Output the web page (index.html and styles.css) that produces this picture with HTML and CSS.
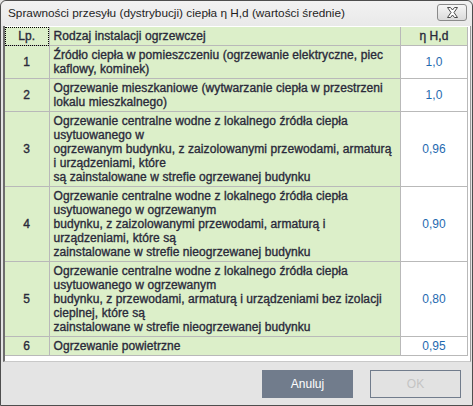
FILE: index.html
```html
<!DOCTYPE html>
<html lang="pl">
<head>
  <meta charset="UTF-8" />
  <title>Sprawności przesyłu</title>
  <link rel="stylesheet" href="styles.css">
</head>
<body>
  <div class="window">
    <div class="titlebar">
      <span class="title">Sprawności przesyłu (dystrybucji) ciepła η H,d (wartości średnie)</span>
      <button class="close-btn" aria-label="Zamknij">
        <svg width="17" height="11" viewBox="0 0 17 11">
          <path d="M3.5 0.5h3l2 2.5 2-2.5h3l-3.5 5 3.5 5h-3l-2-2.5-2 2.5h-3l3.5-5z"
                fill="#fff" stroke="#4a4a4a" stroke-width="1" stroke-linejoin="round"/>
        </svg>
      </button>
    </div>

    <div class="pane">
      <table class="grid">
        <thead>
          <tr>
            <th class="col-lp focused">Lp.</th>
            <th class="col-name">Rodzaj instalacji ogrzewczej</th>
            <th class="col-val">η H,d</th>
          </tr>
        </thead>
        <tbody>
          <tr>
            <td class="col-lp">1</td>
            <td class="col-name">Źródło ciepła w pomieszczeniu (ogrzewanie elektryczne, piec<br>kaflowy, kominek)</td>
            <td class="col-val">1,0</td>
          </tr>
          <tr>
            <td class="col-lp">2</td>
            <td class="col-name">Ogrzewanie mieszkaniowe (wytwarzanie ciepła w przestrzeni<br>lokalu mieszkalnego)</td>
            <td class="col-val">1,0</td>
          </tr>
          <tr>
            <td class="col-lp">3</td>
            <td class="col-name">Ogrzewanie centralne wodne z lokalnego źródła ciepła<br>usytuowanego w<br>ogrzewanym budynku, z zaizolowanymi przewodami, armaturą<br>i urządzeniami, które<br>są zainstalowane w strefie ogrzewanej budynku</td>
            <td class="col-val">0,96</td>
          </tr>
          <tr>
            <td class="col-lp">4</td>
            <td class="col-name">Ogrzewanie centralne wodne z lokalnego źródła ciepła<br>usytuowanego w ogrzewanym<br>budynku, z zaizolowanymi przewodami, armaturą i<br>urządzeniami, które są<br>zainstalowane w strefie nieogrzewanej budynku</td>
            <td class="col-val">0,90</td>
          </tr>
          <tr>
            <td class="col-lp">5</td>
            <td class="col-name">Ogrzewanie centralne wodne z lokalnego źródła ciepła<br>usytuowanego w ogrzewanym<br>budynku, z przewodami, armaturą i urządzeniami bez izolacji<br>cieplnej, które są<br>zainstalowane w strefie nieogrzewanej budynku</td>
            <td class="col-val">0,80</td>
          </tr>
          <tr>
            <td class="col-lp">6</td>
            <td class="col-name">Ogrzewanie powietrzne</td>
            <td class="col-val">0,95</td>
          </tr>
        </tbody>
      </table>
    </div>

    <div class="actions">
      <button class="btn btn-primary">Anuluj</button>
      <button class="btn" disabled>OK</button>
    </div>
  </div>
</body>
</html>
```

FILE: styles.css
```css
* {
  margin: 0;
  padding: 0;
  box-sizing: border-box;
}

body {
  width: 473px;
  height: 406px;
  background: #e4e4e4;
  font-family: 'Liberation Sans', Arial, sans-serif;
}

.window {
  width: 473px;
  height: 406px;
  border: 1px solid #4e4e4e;
  border-radius: 6px 6px 0 0;
  background: #e4e4e4;
  display: flex;
  flex-direction: column;
}

.titlebar {
  height: 25px;
  display: flex;
  align-items: center;
  justify-content: space-between;
  padding: 0 5px 2px 7px;
  background: linear-gradient(#f2f2f2, #e9e9e9);
  border-radius: 6px 6px 0 0;
}

.title {
  font-size: 11.8px;
  color: #1e1e1e;
}

.close-btn {
  width: 30px;
  height: 17px;
  border: 1px solid #8a8a8a;
  border-radius: 3px;
  background: linear-gradient(#f6f6f6, #dadada);
  display: flex;
  align-items: center;
  justify-content: center;
}

.pane {
  height: 336px;
  margin: 0 1px 0 2px;
  background: #fff;
  border-left: 2px solid #6e6e6e;
  border-right: 1px solid #9a9a9a;
  border-bottom: 1px solid #c8c8c8;
  padding-top: 1px;
}

.grid {
  width: 463px;
  border-collapse: collapse;
  font-size: 12px;
  line-height: 14px;
  letter-spacing: 0.08px;
  color: #2a2a3a;
}

.grid th,
.grid td {
  border: 1px solid #b9b9b9;
  padding: 2px 4px;
  white-space: nowrap;
  font-weight: normal;
  -webkit-text-stroke: 0.35px #2a2a3a;
}

.grid tr > :first-child {
  border-left: none;
}

.grid thead th {
  border-top: none;
}

.col-lp {
  width: 44px;
  text-align: center;
  background: #dcefc9;
}

.col-name {
  text-align: left;
  background: #dcefc9;
}

.col-val {
  width: 67px;
  text-align: center;
  background: #fff;
}

.grid thead .col-val {
  background: #dcefc9;
}

.grid td.col-val {
  color: #1f6ab0;
  -webkit-text-stroke: 0;
}

.grid th.focused {
  outline: 1px dotted #000;
  outline-offset: -1px;
}

.actions {
  flex: 1;
  display: flex;
  justify-content: flex-end;
  align-items: flex-start;
  gap: 17px;
  padding: 8px 11px 0 0;
}

.btn {
  width: 91px;
  height: 28px;
  font-family: 'Liberation Sans', Arial, sans-serif;
  font-size: 12px;
  border: 1px solid #717c8c;
  background: #e2e2e2;
  color: #c4c4c4;
}

.btn-primary {
  background: #717c8c;
  color: #fff;
}
```
